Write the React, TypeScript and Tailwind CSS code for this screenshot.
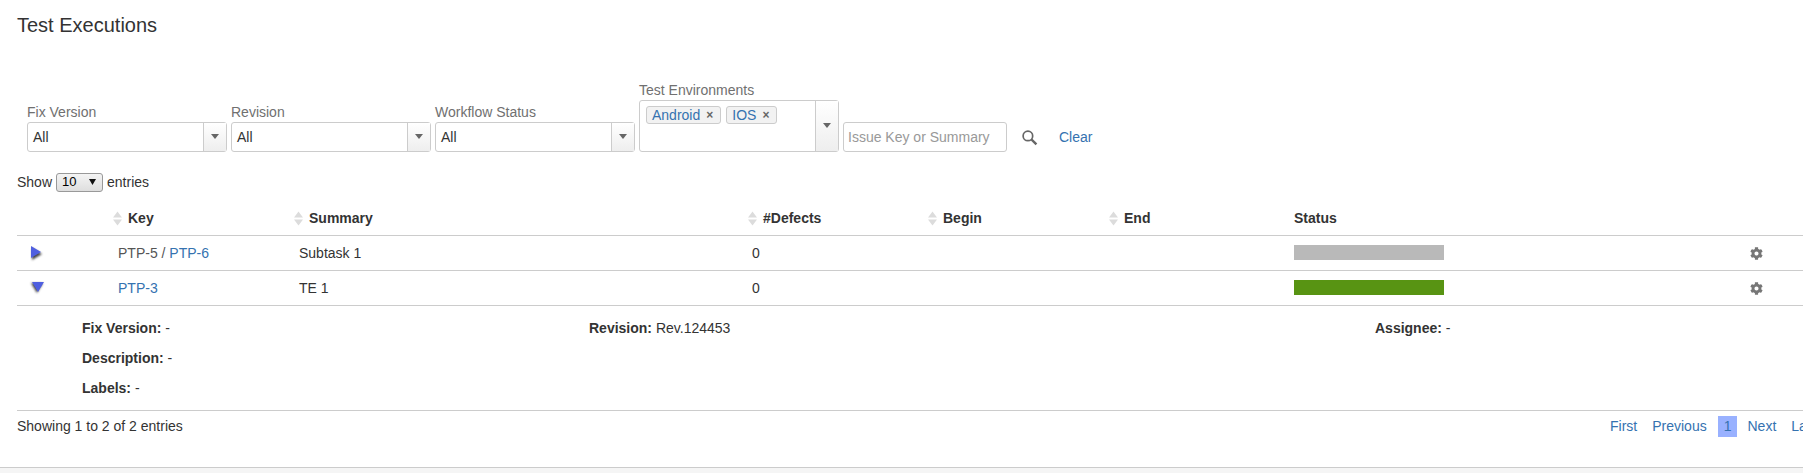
import { FaCog } from 'react-icons/fa'

const font = { fontFamily: '"Liberation Sans", Arial, sans-serif' }

const Caret = () => (
  <svg width="8" height="5" viewBox="0 0 8 5" className="mb-[2px]">
    <path d="M0 0h8L4 5z" fill="#666" />
  </svg>
)

const FilterSelect = ({ label }: { label: string }) => (
  <div className="w-[200px] shrink-0">
    <div className="text-[14px] leading-[20px] text-[#707070]">{label}</div>
    <div className="flex h-[30px] rounded-[3px] border border-[#ccc] bg-white">
      <div className="flex-1 pl-[5px] text-[14px] leading-[28px] text-[#333]">All</div>
      <div className="flex w-[23px] items-center justify-center border-l border-[#ccc] bg-gradient-to-b from-white to-[#eee]">
        <Caret />
      </div>
    </div>
  </div>
)

const Tag = ({ label }: { label: string }) => (
  <span className="flex h-[18px] items-center rounded-[3px] border border-[#ccc] bg-[#f2f2f2] pl-[5px] pr-[7px] text-[14px] text-[#3572b0]">
    {label}
    <span className="ml-[6px] text-[12px] leading-none font-bold text-[#666]">×</span>
  </span>
)

const SortIcon = () => (
  <svg width="9" height="15" viewBox="0 0 9 15" className="mr-[6px] shrink-0">
    <path d="M4.5 0.5l4.5 6H0z M4.5 14.5l4.5-6H0z" fill="#dcdcdc" />
  </svg>
)

const Head = ({ label, sort = true }: { label: string; sort?: boolean }) => (
  <th className="h-[36px] p-0 pt-[4px] pl-[6px] text-left font-bold">
    <div className="flex items-center">
      {sort && <SortIcon />}
      {label}
    </div>
  </th>
)

const Expander = ({ open }: { open?: boolean }) => (
  <svg width="18" height="18" viewBox="0 0 18 18" className="ml-[11px] block">
    <defs>
      <filter id={open ? 'blurA' : 'blurB'} x="-50%" y="-50%" width="200%" height="200%">
        <feGaussianBlur stdDeviation="1" />
      </filter>
    </defs>
    {open ? (
      <>
        <path d="M3 4h12l-6 10z" fill="#444" filter="url(#blurA)" />
        <path d="M4 3h12l-6 10z" fill="#4f5fe0" />
      </>
    ) : (
      <>
        <path d="M3 3l10 6-10 6z" fill="#444" filter="url(#blurB)" transform="translate(1 1)" />
        <path d="M3 2l10 6-10 6z" fill="#4f5fe0" />
      </>
    )}
  </svg>
)

const Gear = () => <FaCog className="mt-[2px] ml-[2px] text-[13px] text-[#767676]" />

const Row = ({ open, keyCell, summary, color }: { open?: boolean; keyCell: React.ReactNode; summary: string; color: string }) => (
  <tr className="h-[35px] border-b border-[#ccc]">
    <td className="p-0">
      <Expander open={open} />
    </td>
    <td className="p-0 pt-[2px] pl-[11px] text-[#555]">{keyCell}</td>
    <td className="p-0 pt-[2px] pl-[11px]">{summary}</td>
    <td className="p-0 pt-[2px] pl-[10px]">0</td>
    <td />
    <td />
    <td className="p-0 pl-[11px]">
      <div className={`h-[15px] w-[150px] ${color}`} />
    </td>
    <td className="p-0">
      <Gear />
    </td>
  </tr>
)

const Detail = ({ label, value }: { label: string; value: string }) => (
  <div className="h-[30px] leading-[20px]">
    <b>{label}:</b> {value}
  </div>
)

export default function App() {
  return (
    <div className="h-[474px] w-[1803px] overflow-hidden bg-white text-[14px] text-[#333]" style={font}>
      <div className="h-[468px] border-b border-[#ccc] pl-[17px]">
        <h1 className="pt-[13px] text-[20px] leading-[24px] font-normal text-[#333]">Test Executions</h1>

        <div className="mt-[43px] flex items-end pl-[10px]">
          <div className="flex gap-[4px]">
            <div className="flex items-end gap-[4px]">
              <FilterSelect label="Fix Version" />
              <FilterSelect label="Revision" />
              <FilterSelect label="Workflow Status" />
            </div>
            <div className="w-[200px] shrink-0">
              <div className="text-[14px] leading-[20px] text-[#707070]">Test Environments</div>
              <div className="flex h-[52px] rounded-[3px] border border-[#ccc] bg-white">
                <div className="flex flex-1 items-start gap-[5px] pt-[5px] pl-[6px]">
                  <Tag label="Android" />
                  <Tag label="IOS" />
                </div>
                <div className="flex w-[23px] items-center justify-center border-l border-[#ccc] bg-gradient-to-b from-white to-[#eee]">
                  <Caret />
                </div>
              </div>
            </div>
          </div>
          <div className="ml-[4px] h-[30px] w-[164px] rounded-[3px] border border-[#ccc] pl-[4px] text-[14px] leading-[28px] text-[#999]">
            Issue Key or Summary
          </div>
          <svg width="17" height="17" viewBox="0 0 16 16" className="mb-[6px] ml-[14px]">
            <circle cx="6.5" cy="6.5" r="4.5" fill="none" stroke="#666" strokeWidth="1.6" />
            <path d="M10 10l4.5 4.5" stroke="#666" strokeWidth="2.2" />
          </svg>
          <a className="ml-[21px] pb-[5px] leading-[20px] text-[#3572b0]">Clear</a>
        </div>

        <div className="mt-[20px] flex h-[20px] items-center">
          Show
          <div className="mx-[4px] flex h-[19px] w-[47px] items-center justify-between rounded-[3px] border border-[#999] bg-gradient-to-b from-[#f4f4f4] to-[#dedede] pr-[6px] pl-[5px] text-[13px] text-black">
            10
            <svg width="7" height="6" viewBox="0 0 7 6">
              <path d="M0 0h7L3.5 6z" fill="#111" />
            </svg>
          </div>
          entries
        </div>

        <table className="mt-[7px] w-[1857px] table-fixed border-collapse">
          <colgroup>
            <col className="w-[90px]" />
            <col className="w-[181px]" />
            <col className="w-[454px]" />
            <col className="w-[180px]" />
            <col className="w-[181px]" />
            <col className="w-[180px]" />
            <col className="w-[465px]" />
            <col />
          </colgroup>
          <thead>
            <tr className="border-b border-[#ccc]">
              <Head label="" sort={false} />
              <Head label="Key" />
              <Head label="Summary" />
              <Head label="#Defects" />
              <Head label="Begin" />
              <Head label="End" />
              <th className="p-0 pt-[4px] pl-[11px] text-left font-bold">Status</th>
              <th />
            </tr>
          </thead>
          <tbody>
            <Row
              keyCell={
                <>
                  PTP-5 / <a className="text-[#3572b0]">PTP-6</a>
                </>
              }
              summary="Subtask 1"
              color="bg-[#b9b9b9]"
            />
            <Row open keyCell={<a className="text-[#3572b0]">PTP-3</a>} summary="TE 1" color="bg-[#589413]" />
            <tr className="border-b border-[#ccc]">
              <td colSpan={8} className="p-0 pt-[12px] pl-[65px]">
                <div className="flex h-[92px]">
                  <div className="w-[507px]">
                    <Detail label="Fix Version" value="-" />
                    <Detail label="Description" value="-" />
                    <Detail label="Labels" value="-" />
                  </div>
                  <div className="w-[786px]">
                    <Detail label="Revision" value="Rev.124453" />
                  </div>
                  <div>
                    <Detail label="Assignee" value="-" />
                  </div>
                </div>
              </td>
            </tr>
          </tbody>
        </table>

        <div className="flex w-[1857px] items-start justify-between pt-[5px]">
          <div className="leading-[20px]">Showing 1 to 2 of 2 entries</div>
          <div className="flex w-[264px] items-center leading-[21px] text-[#3572b0]">
            <a className="mr-[15px]">First</a>
            <a className="mr-[11px]">Previous</a>
            <a className="mr-[10px] h-[21px] bg-[#99b1ff] px-[6px]">1</a>
            <a className="mr-[15px]">Next</a>
            <a>Last</a>
          </div>
        </div>
      </div>
      <div className="h-[5px] bg-[#f5f5f5]" />
    </div>
  )
}
